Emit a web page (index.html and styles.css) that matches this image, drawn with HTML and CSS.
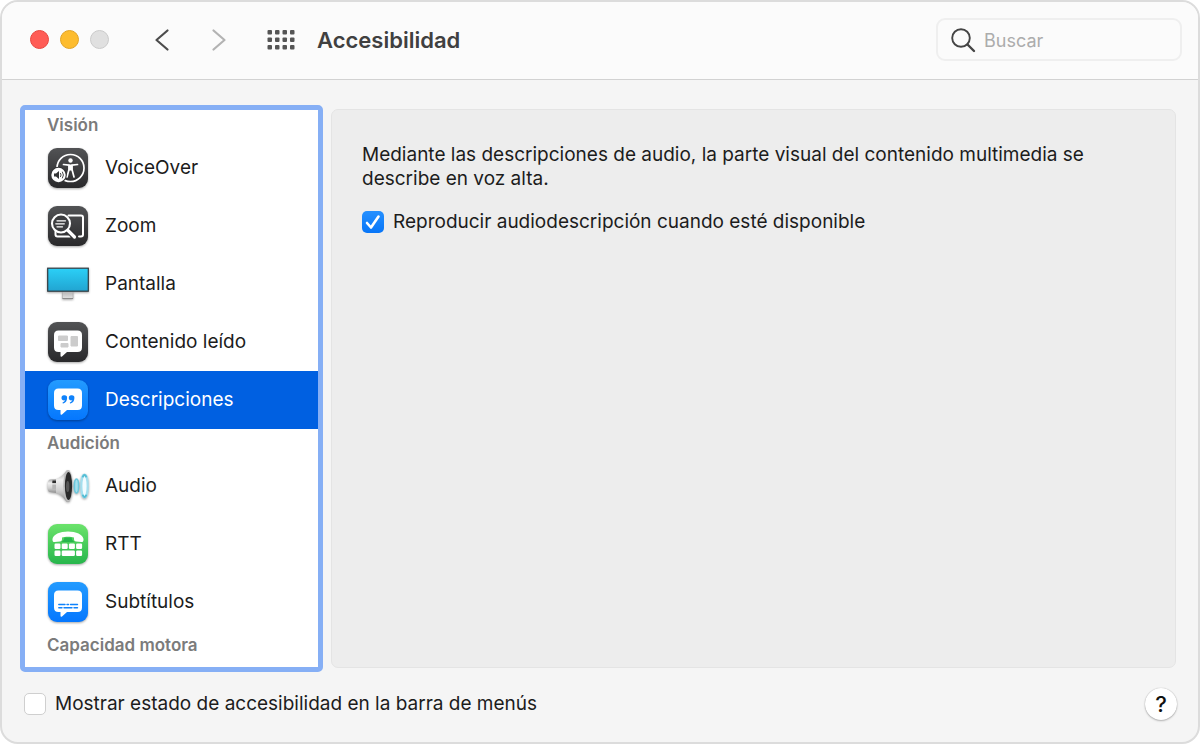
FILE: index.html
```html
<!DOCTYPE html>
<html lang="es">
<head>
  <meta charset="UTF-8" />
  <title>Accesibilidad</title>
  <meta name="viewport" content="width=device-width, initial-scale=1.0" />
  <link rel="stylesheet" href="styles.css">
</head>
<body>

  <div class="window">
    <header class="titlebar">
      <div class="traffic">
        <button class="light close" aria-label="Cerrar"></button>
        <button class="light minimize" aria-label="Minimizar"></button>
        <button class="light expand" aria-label="Ampliar" disabled></button>
      </div>
      <div class="history">
        <button class="icon-btn" aria-label="Atrás">
          <svg width="16" height="24" viewBox="0 0 16 24"><path d="M13.500 2.500 2.500 12l11 9.500" fill="none" stroke="#4d4d4d" stroke-width="2.200" stroke-linecap="round" stroke-linejoin="round"/></svg>
        </button>
        <button class="icon-btn" aria-label="Adelante" disabled>
          <svg width="16" height="24" viewBox="0 0 16 24"><path d="M2.500 2.500 13.500 12l-11 9.500" fill="none" stroke="#b3b3b3" stroke-width="2.200" stroke-linecap="round" stroke-linejoin="round"/></svg>
        </button>
      </div>
      <button class="icon-btn" aria-label="Mostrar todo">
        <svg width="28" height="20" viewBox="0 0 28 20" fill="#555">
          <rect x="0.500" y="0" width="4.500" height="4.500" rx="1"/><rect x="8" y="0" width="4.500" height="4.500" rx="1"/><rect x="15.500" y="0" width="4.500" height="4.500" rx="1"/><rect x="23" y="0" width="4.500" height="4.500" rx="1"/>
          <rect x="0.500" y="7.500" width="4.500" height="4.500" rx="1"/><rect x="8" y="7.500" width="4.500" height="4.500" rx="1"/><rect x="15.500" y="7.500" width="4.500" height="4.500" rx="1"/><rect x="23" y="7.500" width="4.500" height="4.500" rx="1"/>
          <rect x="0.500" y="15" width="4.500" height="4.500" rx="1"/><rect x="8" y="15" width="4.500" height="4.500" rx="1"/><rect x="15.500" y="15" width="4.500" height="4.500" rx="1"/><rect x="23" y="15" width="4.500" height="4.500" rx="1"/>
        </svg>
      </button>
      <h1>Accesibilidad</h1>
      <label class="search">
        <svg width="26" height="26" viewBox="0 0 26 26" fill="none" stroke="#454545" stroke-linecap="round"><circle cx="11" cy="11" r="8.800" stroke-width="1.900"/><path d="M17.500 17.500 24 24" stroke-width="2.400"/></svg>
        <input type="search" placeholder="Buscar" aria-label="Buscar" />
      </label>
    </header>

    <main class="content">
      <nav class="sidebar">
        <h2>Visión</h2>
        <a class="item" href="#voiceover">
          <svg class="icon" viewBox="0 0 40 40">
            <defs>
              <linearGradient id="dark" x1="0" y1="0" x2="0" y2="1"><stop offset="0" stop-color="#525355"/><stop offset="1" stop-color="#29292b"/></linearGradient>
              <linearGradient id="blue" x1="0" y1="0" x2="0" y2="1"><stop offset="0" stop-color="#239bff"/><stop offset="1" stop-color="#0577fe"/></linearGradient>
              <linearGradient id="green" x1="0" y1="0" x2="0" y2="1"><stop offset="0" stop-color="#6be36b"/><stop offset="1" stop-color="#27b64c"/></linearGradient>
            </defs>
            <rect width="40" height="40" rx="9" fill="url(#dark)"/>
            <circle cx="22.500" cy="20" r="13.500" fill="none" stroke="#fff" stroke-width="1.700"/>
            <circle cx="22.500" cy="12.500" r="2.200" fill="#fff"/>
            <path d="M15.500 16.500 21 17.200v4.300l-2 7.500M29.500 16.500 24 17.200v4.300l2 7.500" fill="none" stroke="#fff" stroke-width="1.700" stroke-linecap="round" stroke-linejoin="round"/>
            <path d="M20.500 16.500h4v6h-4z" fill="#fff"/>
            <circle cx="10.500" cy="27" r="8.200" fill="#333436"/>
            <circle cx="10.500" cy="27" r="7.200" fill="#fff"/>
            <path d="M6 25.500h2l3-2.500v8l-3-2.500H6z" fill="#333436"/>
            <path d="M12.600 25.300q1.200 1.700 0 3.400M14.500 24q2 3 0 6" fill="none" stroke="#333436" stroke-width="0.900" stroke-linecap="round"/>
          </svg>
          VoiceOver
        </a>
        <a class="item" href="#zoom">
          <svg class="icon" viewBox="0 0 40 40">
            <rect width="40" height="40" rx="9" fill="url(#dark)"/>
            <path d="M20.500 9.500H33q2 0 2 2v17q0 2-2 2h-2M7.500 25v3.500q0 2 2 2H22" fill="none" stroke="#fff" stroke-width="2" stroke-linecap="round"/>
            <path d="m19.500 24 7.500 7.500" stroke="#333436" stroke-width="6" stroke-linecap="round"/>
            <circle cx="13" cy="17.500" r="9" fill="#3c3d3f" stroke="#fff" stroke-width="2.100"/>
            <path d="m20 24.500 6.500 6.500" stroke="#fff" stroke-width="3.200" stroke-linecap="round"/>
            <path d="M9 14.800h8.500M7.800 17.800h8.500M9 20.800h5.500" stroke="#fff" stroke-width="1.300" stroke-linecap="round"/>
          </svg>
          Zoom
        </a>
        <a class="item" href="#pantalla">
          <svg class="icon display" viewBox="0 0 42 34">
            <defs>
              <linearGradient id="screen" x1="0" y1="0" x2="0" y2="1"><stop offset="0" stop-color="#2bd0f7"/><stop offset="1" stop-color="#21a4d1"/></linearGradient>
              <linearGradient id="stand" x1="0" y1="0" x2="0" y2="1"><stop offset="0" stop-color="#b0b0b0"/><stop offset="1" stop-color="#e2e2e2"/></linearGradient>
            </defs>
            <rect x="15.500" y="24" width="10.500" height="7.500" fill="url(#stand)" stroke="#aaa" stroke-width="0.600"/>
            <path d="M15.500 31.500H26" stroke="#8c8c8c"/>
            <rect x="0.700" y="1.200" width="40.600" height="23" fill="url(#screen)" stroke="#333b40" stroke-width="1.200"/>
          </svg>
          Pantalla
        </a>
        <a class="item" href="#contenido">
          <svg class="icon" viewBox="0 0 40 40">
            <rect width="40" height="40" rx="9" fill="url(#dark)"/>
            <path d="M10.500 8.500h19q4.500 0 4.500 4.500v12.500q0 4.500-4.500 4.500H19l-5 4.500q-1.500 1-1.500-1V30h-2Q6 30 6 25.500V13q0-4.500 4.500-4.500z" fill="#fff"/>
            <path d="M10.500 14h9v4.500h-9zM23 14.500h6.500v9.500H23zM13 21.500h7v3.500h-7z" fill="#ccc" stroke="#ccc" stroke-linejoin="round"/>
          </svg>
          Contenido leído
        </a>
        <a class="item selected" href="#descripciones" aria-current="page">
          <svg class="icon" viewBox="0 0 40 40">
            <rect width="40" height="40" rx="9" fill="url(#blue)"/>
            <path d="M10.500 8.500h19q4.500 0 4.500 4.500v12.500q0 4.500-4.500 4.500H19l-5 4.500q-1.500 1-1.500-1V30h-2Q6 30 6 25.500V13q0-4.500 4.500-4.500z" fill="#fff"/>
            <path d="M16.500 15.300a2.600 2.600 0 0 1 2.600 2.800c0 3-1.600 4.900-3.900 5.300-.8.100-.9-.8-.2-1.100 1.200-.5 1.800-1.200 2-2-2.300.4-3.500-.8-3.500-2.300a2.700 2.700 0 0 1 3-2.700zM23.800 15.300a2.600 2.600 0 0 1 2.600 2.800c0 3-1.600 4.900-3.900 5.300-.8.100-.9-.8-.2-1.100 1.200-.5 1.800-1.200 2-2-2.300.4-3.500-.8-3.500-2.300a2.700 2.700 0 0 1 3-2.700z" fill="#0f82fb"/>
          </svg>
          Descripciones
        </a>

        <h2>Audición</h2>
        <a class="item" href="#audio">
          <svg class="icon audio" viewBox="0 0 42 34">
            <defs>
              <linearGradient id="cone" x1="0" y1="0" x2="0" y2="1"><stop offset="0" stop-color="#a5a5a5"/><stop offset="0.300" stop-color="#f0f0f0"/><stop offset="0.650" stop-color="#cfcfcf"/><stop offset="1" stop-color="#8c8c8c"/></linearGradient>
            </defs>
            <path d="M10 10 3 10.500Q0.500 11 0.500 17T3 23L10 24z" fill="url(#cone)"/>
            <path d="M5.500 11.500H9v3H5.300zM5.300 15.500H9v5H5.300z" fill="#b5b5b5"/>
            <path d="M5.500 11.500H9V14H5.300z" fill="#2d2d2d"/>
            <path d="M9 10.200Q15 8 19.500 1.500h3v31h-3Q15 26 9 23.800z" fill="url(#cone)"/>
            <ellipse cx="21" cy="17" rx="4.800" ry="15.700" fill="#bcbcbc"/>
            <ellipse cx="21.500" cy="17" rx="3.600" ry="14" fill="#292929"/>
            <ellipse cx="20.700" cy="17.500" rx="1.700" ry="5.500" fill="#555"/>
            <ellipse cx="29.500" cy="17" rx="2.100" ry="7" fill="#a5e0ee" stroke="#6cc8dd" stroke-width="1.600"/>
            <ellipse cx="37.500" cy="17" rx="3.200" ry="11.500" fill="#f2fcff" stroke="#a4dfee" stroke-width="2.200"/>
            <path d="M36 7.500q1.500-3 3 0M36 26.500q1.500 3 3 0" fill="none" stroke="#55bdd4" stroke-width="2" stroke-linecap="round"/>
          </svg>
          Audio
        </a>
        <a class="item" href="#rtt">
          <svg class="icon" viewBox="0 0 40 40">
            <rect width="40" height="40" rx="9" fill="url(#green)"/>
            <path d="M20 7.500c8 0 15 3 15.500 7.500.2 2-.5 3.300-2.300 3.100l-5-.6c-1.700-.2-2.200-1.100-2.200-2.500v-1.400c-3-1-9-1-12 0V15c0 1.400-.5 2.300-2.200 2.500l-5 .6c-1.800.2-2.500-1.100-2.300-3.100C5 10.500 12 7.500 20 7.500z" fill="#fff"/>
            <path d="M16.500 13.500h7q.3 3.500 3 4.500h-13q2.700-1 3-4.500z" fill="#27b64c"/>
            <g fill="#fff">
              <rect x="6.500" y="19.500" width="6" height="5.500" rx="1.200"/><rect x="13.700" y="19.500" width="6" height="5.500" rx="1.200"/><rect x="20.900" y="19.500" width="6" height="5.500" rx="1.200"/><rect x="28.100" y="19.500" width="6" height="5.500" rx="1.200"/>
              <rect x="6.500" y="26.500" width="6" height="5.500" rx="1.200"/><rect x="13.700" y="26.500" width="13.200" height="5.500" rx="1.200"/><rect x="28.100" y="26.500" width="6" height="5.500" rx="1.200"/>
            </g>
          </svg>
          RTT
        </a>
        <a class="item" href="#subtitulos">
          <svg class="icon" viewBox="0 0 40 40">
            <rect width="40" height="40" rx="9" fill="url(#blue)"/>
            <path d="M10.500 8.500h19q4.500 0 4.500 4.500v12.500q0 4.500-4.500 4.500H19l-5 4.500q-1.500 1-1.500-1V30h-2Q6 30 6 25.500V13q0-4.500 4.500-4.500z" fill="#fff"/>
            <path d="M10.800 22.500h6.200M19 22.500h1.500M22.500 22.500h7M10.800 25.800h3.200M16 25.800h8M26 25.800h3.500" stroke="#0f82fb" stroke-width="1.400" stroke-linecap="round"/>
          </svg>
          Subtítulos
        </a>

        <h2>Capacidad motora</h2>
      </nav>

      <section class="panel">
        <p>Mediante las descripciones de audio, la parte visual del contenido multimedia se describe en voz alta.</p>
        <label class="check">
          <input type="checkbox" checked />
          Reproducir audiodescripción cuando esté disponible
        </label>
      </section>
    </main>

    <footer class="bottombar">
      <label class="check">
        <input type="checkbox" />
        Mostrar estado de accesibilidad en la barra de menús
      </label>
      <button class="help" aria-label="Ayuda">?</button>
    </footer>
  </div>

</body>
</html>
```

FILE: styles.css
```css
:root {
  --bg: #f5f5f5;
  --bar: #fbfbfb;
  --panel: #ededed;
  --border: #dcdcdc;
  --text: #1c1c1c;
  --muted: #7b7b7b;
  --accent: #0060e1;
  --ring: #86aff5;
}

* {
  box-sizing: border-box;
}

body {
  margin: 0;
  background: #fff;
  color: var(--text);
  font-family: Inter, "Liberation Sans", sans-serif;
  font-size: 19px;
  line-height: 24px;
}

button {
  padding: 0;
  border: none;
  background: none;
  font-family: inherit;
}

.window {
  display: flex;
  flex-direction: column;
  min-height: 100vh;
  background: var(--bg);
  border: 2px solid var(--border);
  border-radius: 18px;
  overflow: hidden;
}

/* title bar */
.titlebar {
  display: flex;
  align-items: center;
  height: 78px;
  padding: 0 16px 2px 28px;
  background: var(--bar);
  border-bottom: 1px solid #d2d2d2;
}

.traffic {
  display: flex;
  gap: 11px;
  margin-right: 45px;
}

.light {
  width: 19px;
  height: 19px;
  border: 1px solid;
  border-radius: 50%;
}

.close {
  background: #ff5c56;
  border-color: #e8463f;
}

.minimize {
  background: #fdbc2e;
  border-color: #e2a325;
}

.expand {
  background: #e0e0e0;
  border-color: #cbcbcb;
}

.icon-btn {
  display: flex;
}

.history {
  display: flex;
  gap: 41px;
  margin-right: 40px;
}

h1 {
  margin: 0 auto 0 22px;
  color: #404040;
  font-size: 22px;
  font-weight: 600;
}

.search {
  display: flex;
  align-items: center;
  gap: 8px;
  width: 246px;
  height: 43px;
  padding: 0 12px;
  border: 2px solid #efefef;
  border-radius: 9px;
}

.search svg {
  flex: none;
}

.search input {
  width: 100%;
  min-width: 0;
  padding: 2px 0 0;
  border: none;
  outline: none;
  background: none;
  font: inherit;
  font-size: 18px;
}

.search input::placeholder {
  color: #acacac;
}

/* body */
.content {
  flex: 1;
  display: grid;
  grid-template-columns: 303px 1fr;
  gap: 8px;
  padding: 25px 22px 0 18px;
}

.sidebar {
  padding: 1px 0 7px;
  background: #fff;
  border: 5px solid var(--ring);
  border-radius: 5px;
}

h2 {
  margin: 0;
  padding-left: 22px;
  color: var(--muted);
  font-size: 17px;
  font-weight: 600;
  line-height: 28px;
}

.item {
  display: flex;
  align-items: center;
  gap: 17px;
  height: 58px;
  padding-left: 23px;
  color: var(--text);
  text-decoration: none;
}

.item.selected {
  background: var(--accent);
  color: #fff;
}

.icon {
  flex: none;
  width: 40px;
  height: 40px;
  filter: drop-shadow(0 1px 1px rgba(0, 0, 0, 0.35));
}

.icon.display,
.icon.audio {
  width: 42px;
  height: 34px;
  margin: 0 -1px;
}

.panel {
  margin: 4px 0;
  padding: 33px 30px;
  background: var(--panel);
  border: 1px solid #e4e4e4;
  border-radius: 7px;
}

.panel p {
  max-width: 760px;
  margin: 0 0 19px;
}

.check {
  display: flex;
  align-items: center;
  gap: 9px;
}

.check input {
  appearance: none;
  flex: none;
  width: 22px;
  height: 22px;
  margin: 0;
  background: #fff;
  border: 1px solid #cfcfcf;
  border-radius: 5px;
}

.check input:checked {
  border: none;
  background: url("data:image/svg+xml,%3Csvg xmlns='http://www.w3.org/2000/svg' viewBox='0 0 22 22'%3E%3Cpath d='M5 12l4 4.500L16.500 5.500' fill='none' stroke='white' stroke-width='2.600' stroke-linecap='round' stroke-linejoin='round'/%3E%3C/svg%3E"), linear-gradient(#2590ff, #0876f8);
}

/* bottom bar */
.bottombar {
  display: flex;
  align-items: center;
  justify-content: space-between;
  height: 70px;
  padding: 0 21px 6px 22px;
}

.help {
  width: 32px;
  height: 32px;
  background: #fff;
  border-radius: 50%;
  box-shadow: 0 0 1px rgba(0, 0, 0, 0.3), 0 1px 2px rgba(0, 0, 0, 0.25);
  color: #111;
  font-size: 22px;
  font-weight: 500;
  line-height: 32px;
}
```
